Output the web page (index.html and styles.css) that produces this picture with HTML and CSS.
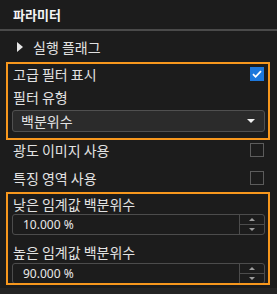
FILE: index.html
```html
<!DOCTYPE html>
<html>
<head>
  <meta charset="UTF-8">
  <title>파라미터</title>
  <link rel="stylesheet" href="styles.css">
</head>
<body>
  <div class="panel">
    <div class="panel-title">파라미터</div>

    <div class="panel-body">
      <!-- collapsed tree item -->
      <div class="tree-row"><span class="caret"></span>실행 플래그</div>

      <!-- highlighted: filter options -->
      <div class="group">
        <div class="row">
          <span>고급 필터 표시</span>
          <span class="check on">
            <svg width="14" height="14" viewBox="0 0 14 14"><path d="M3 7.2l2.6 2.6L11 4.2" fill="none" stroke="#fff" stroke-width="1.8"/></svg>
          </span>
        </div>
        <div class="label">필터 유형</div>
        <div class="select">
          <span>백분위수</span>
          <span class="select-arrow"></span>
        </div>
      </div>

      <div class="row plain">
        <span>광도 이미지 사용</span>
        <span class="check"></span>
      </div>
      <div class="row plain last">
        <span>특징 영역 사용</span>
        <span class="check"></span>
      </div>

      <!-- highlighted: thresholds -->
      <div class="group group-thresholds">
        <div class="label first">낮은 임계값 백분위수</div>
        <div class="spin">
          <span class="spin-value">10.000 %</span>
          <span class="spin-buttons">
            <span class="spin-up"></span>
            <span class="spin-down"></span>
          </span>
        </div>
        <div class="label">높은 임계값 백분위수</div>
        <div class="spin">
          <span class="spin-value">90.000 %</span>
          <span class="spin-buttons">
            <span class="spin-up"></span>
            <span class="spin-down"></span>
          </span>
        </div>
      </div>
    </div>
  </div>
</body>
</html>
```

FILE: styles.css
```css
html, body {
  margin: 0;
  padding: 0;
}

body {
  width: 277px;
  height: 294px;
  overflow: hidden;
  background: #242424;
  color: #e2e2e2;
  font-family: "Noto Sans CJK KR", "Noto Sans", sans-serif;
  font-size: 14px;
}

/* ========== PANEL ========== */
.panel {
  height: 288px;
  background: #1c1c1c;
}

.panel-title {
  height: 29px;
  line-height: 29px;
  padding-left: 13px;
  font-size: 13px;
  font-weight: bold;
  color: #f4f4f4;
  border-bottom: 2px solid #4a4a4a;
}

.panel-body {
  padding: 0 7px 0 6px;
}

.tree-row {
  height: 31px;
  line-height: 30px;
  padding-left: 11px;
  display: flex;
  align-items: center;
}

.caret {
  width: 0;
  height: 0;
  border-top: 5px solid transparent;
  border-bottom: 5px solid transparent;
  border-left: 6px solid #e6e6e6;
  margin-right: 10px;
}

/* Orange highlight boxes */
.group {
  border: 2px solid #f7971d;
  padding: 0 3px 6px 4px;
}

.group-thresholds {
  height: 89px;
  padding-bottom: 0;
  overflow: hidden;
}

.row {
  height: 19px;
  display: flex;
  align-items: center;
  justify-content: space-between;
  padding: 0 1px 0 1px;
}

.row.plain {
  height: 20px;
  padding: 0 6px 0 7px;
  margin-bottom: 8px;
}

.row.plain.last {
  margin-bottom: 4px;
}

.check {
  width: 14px;
  height: 14px;
  box-sizing: border-box;
  border: 1px solid #5c5c5c;
}

.check.on {
  background: #1d78dc;
  border-color: #1d78dc;
}

.check svg {
  display: block;
  margin: -1px;
}

.label {
  height: 26px;
  box-sizing: border-box;
  padding: 4px 0 0 1px;
  line-height: 20px;
}

.label.first {
  height: 20px;
  padding-top: 0;
}

.group-thresholds .label:not(.first) {
  height: 28px;
  padding-top: 7px;
}

/* Dropdown */
.select {
  margin-top: 1px;
  height: 22px;
  box-sizing: border-box;
  background: #2b2b2b;
  border: 1px solid #505050;
  border-radius: 3px;
  display: flex;
  align-items: center;
  justify-content: space-between;
  padding: 0 9px 0 8px;
}

.select-arrow {
  width: 0;
  height: 0;
  border-left: 4px solid transparent;
  border-right: 4px solid transparent;
  border-top: 4px solid #f0f0f0;
}

/* Spin boxes */
.spin {
  margin-top: 1px;
  height: 21px;
  box-sizing: border-box;
  border: 1px solid #4c4c4c;
  border-radius: 3px;
  display: flex;
}

.group-thresholds .label + .spin {
  margin-top: 0;
}

.spin-value {
  flex: 1;
  padding-left: 10px;
  line-height: 19px;
  font-family: "Noto Sans", sans-serif;
  font-size: 12px;
  color: #e8e8e8;
}

.spin-buttons {
  width: 24px;
  border-left: 1px solid #4c4c4c;
  display: flex;
  flex-direction: column;
}

.spin-up,
.spin-down {
  flex: 1;
  display: flex;
  align-items: center;
  justify-content: center;
}

.spin-up {
  border-bottom: 1px solid #4c4c4c;
}

.spin-up::before,
.spin-down::before {
  content: "";
  width: 0;
  height: 0;
  border-left: 3px solid transparent;
  border-right: 3px solid transparent;
}

.spin-up::before {
  border-bottom: 3px solid #9c9c9c;
}

.spin-down::before {
  border-top: 3px solid #9c9c9c;
}
```
